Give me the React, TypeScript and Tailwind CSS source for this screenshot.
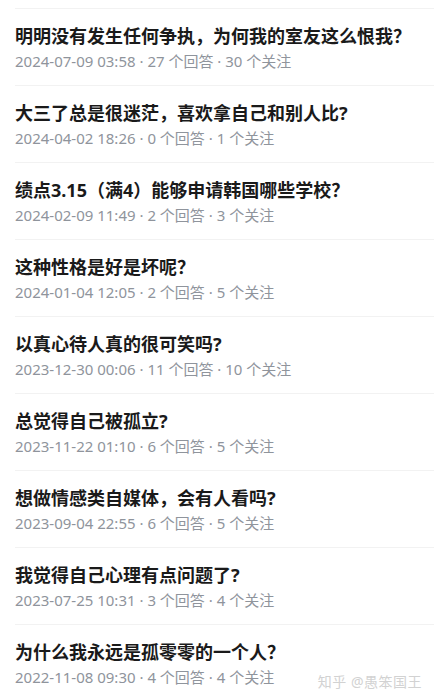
const QUESTIONS = [
  { title: '明明没有发生任何争执，为何我的室友这么恨我？', time: '2024-07-09 03:58', answers: 27, follows: 30 },
  { title: '大三了总是很迷茫，喜欢拿自己和别人比?', time: '2024-04-02 18:26', answers: 0, follows: 1 },
  { title: '绩点3.15（满4）能够申请韩国哪些学校？', time: '2024-02-09 11:49', answers: 2, follows: 3 },
  { title: '这种性格是好是坏呢？', time: '2024-01-04 12:05', answers: 2, follows: 5 },
  { title: '以真心待人真的很可笑吗?', time: '2023-12-30 00:06', answers: 11, follows: 10 },
  { title: '总觉得自己被孤立?', time: '2023-11-22 01:10', answers: 6, follows: 5 },
  { title: '想做情感类自媒体，会有人看吗?', time: '2023-09-04 22:55', answers: 6, follows: 5 },
  { title: '我觉得自己心理有点问题了?', time: '2023-07-25 10:31', answers: 3, follows: 4 },
  { title: '为什么我永远是孤零零的一个人？', time: '2022-11-08 09:30', answers: 4, follows: 4 },
];

export default function App() {
  return (
    <div
      className="relative h-[698px] w-[434px] overflow-hidden bg-white pt-2"
      style={{ fontFamily: '"Noto Sans", "Noto Sans CJK SC", sans-serif' }}
    >
      {QUESTIONS.map((q) => (
        <div key={q.time} className="ml-[15px] border-t border-[#f2f2f2] pt-[14px] pb-[12px]">
          <div className="text-[18px] font-bold leading-[26px] text-[#1a1a1a]">{q.title}</div>
          <div className="text-[15px] leading-[24px] text-[#8f949c]">
            {q.time} · {q.answers} 个回答 · {q.follows} 个关注
          </div>
        </div>
      ))}

      {/* watermark */}
      <div className="absolute right-[12px] bottom-[6px] text-[14px] leading-[20px] tracking-[0.5px] text-[#d2d2d2]">
        知乎 @愚笨国王
      </div>
    </div>
  );
}
